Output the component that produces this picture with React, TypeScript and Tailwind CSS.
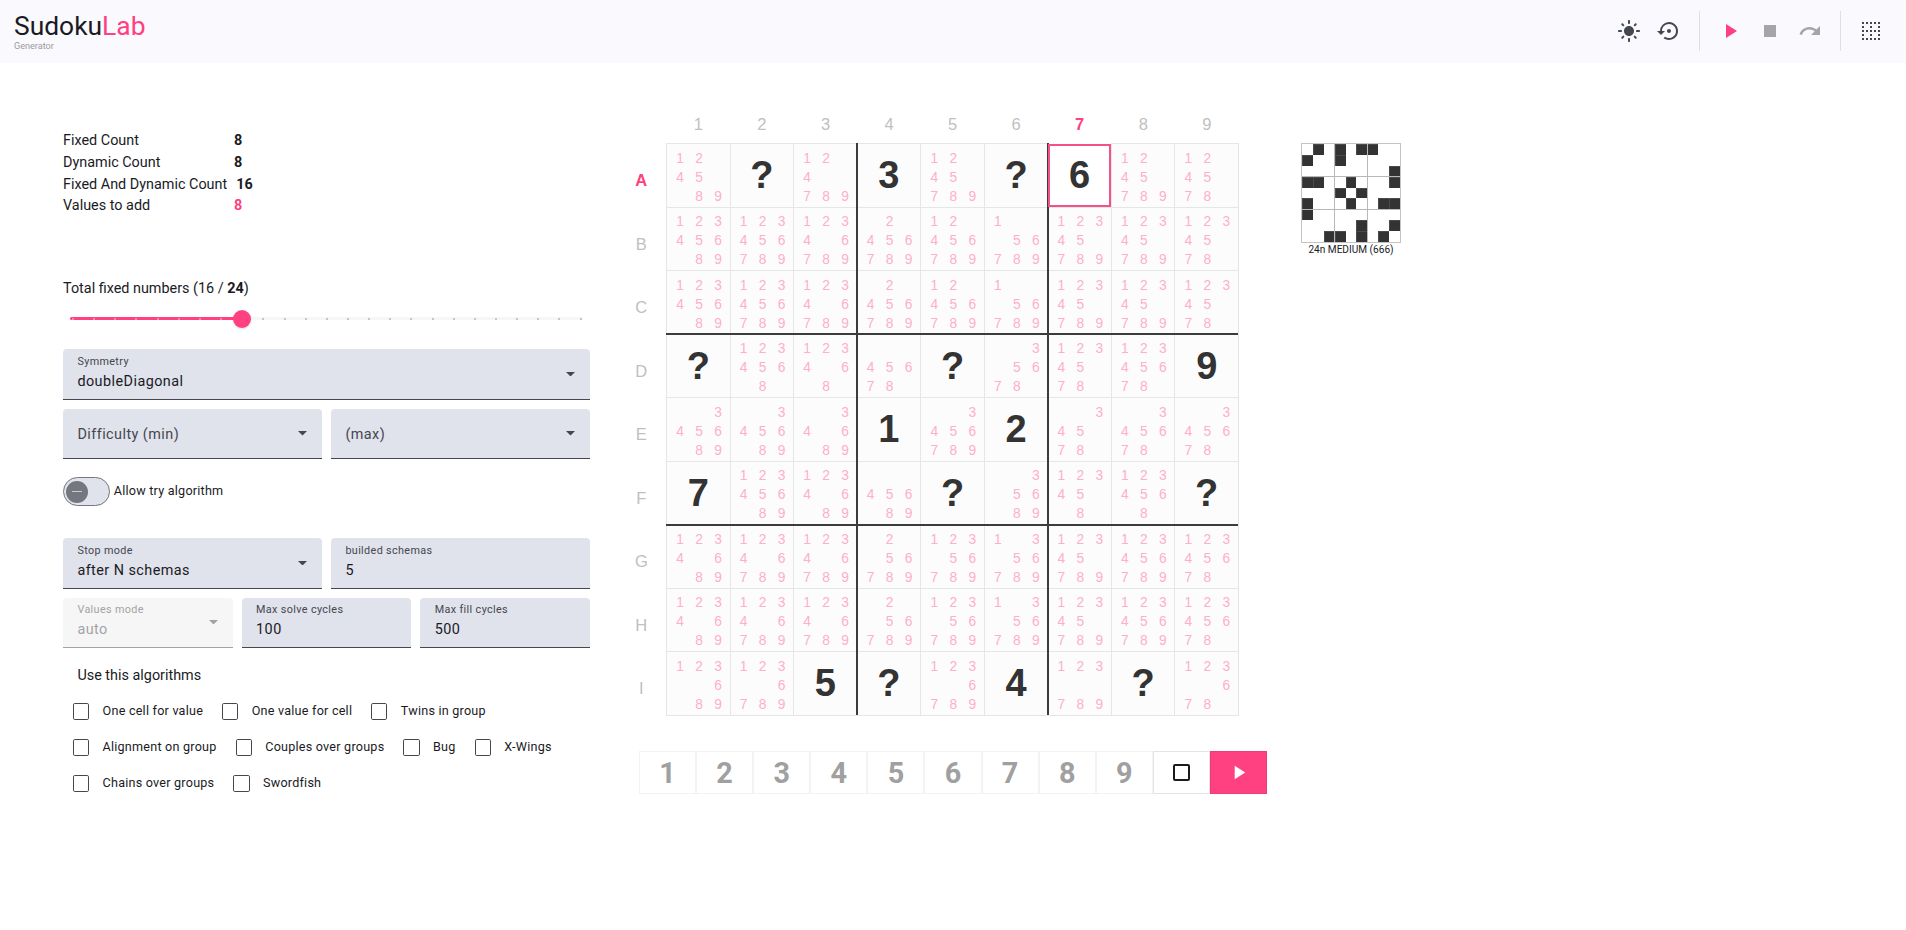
import React from "react";
import {
  MdBorderClear,
  MdLightMode,
  MdPlayArrow,
  MdRedo,
  MdSettingsBackupRestore,
  MdStop,
} from "react-icons/md";

// One entry per cell: "=x" is a fixed value, anything else lists the candidates.
const BOARD: string[][] = [
  ["124589", "=?", "124789", "=3", "1245789", "=?", "=6", "1245789", "124578"],
  ["12345689", "123456789", "12346789", "2456789", "12456789", "156789", "12345789", "12345789", "1234578"],
  ["12345689", "123456789", "12346789", "2456789", "12456789", "156789", "12345789", "12345789", "1234578"],
  ["=?", "1234568", "123468", "45678", "=?", "35678", "1234578", "12345678", "=9"],
  ["345689", "345689", "34689", "=1", "3456789", "=2", "34578", "345678", "345678"],
  ["=7", "12345689", "1234689", "45689", "=?", "35689", "123458", "1234568", "=?"],
  ["1234689", "12346789", "12346789", "256789", "12356789", "1356789", "12345789", "123456789", "12345678"],
  ["1234689", "12346789", "12346789", "256789", "12356789", "1356789", "12345789", "123456789", "12345678"],
  ["123689", "1236789", "=5", "=?", "1236789", "=4", "123789", "=?", "123678"],
];

const PREVIEW = [
  ".#.#.##..",
  "#..#.....",
  "........#",
  "##..#...#",
  "...#.#...",
  "#...#..##",
  "#........",
  ".....#..#",
  "..##.#.#.",
];

const DIGITS = ["1", "2", "3", "4", "5", "6", "7", "8", "9"];
const ROWS = ["A", "B", "C", "D", "E", "F", "G", "H", "I"];
const TICKS = Array.from({ length: 25 }, (_, i) => i);

const ALGORITHMS = [
  ["One cell for value", "One value for cell", "Twins in group"],
  ["Alignment on group", "Couples over groups", "Bug", "X-Wings"],
  ["Chains over groups", "Swordfish"],
];

function Header() {
  return (
    <header className="flex h-[63px] items-center justify-between bg-[#faf9fe] pr-[23px] pb-[2px] pl-[14px]">
      <div>
        <div className="h-[30px] text-[26.4px] leading-[30px] text-[#1a1b1f]">
          Sudoku<span className="text-[#ff4081]">Lab</span>
        </div>
        <div className="h-[10px] text-[9.1px] leading-[10px] text-[#9b9ba0]">Generator</div>
      </div>
      <div className="flex items-center text-[24px] text-[#44474e]">
        <MdLightMode />
        <MdSettingsBackupRestore className="ml-4" />
        <div className="ml-[18px] h-10 w-px bg-[#e0e0e4]" />
        <MdPlayArrow className="ml-[18px] text-[#ff4081]" />
        <MdStop className="ml-4 text-[#a4a4a9]" />
        <MdRedo className="ml-4 text-[#a4a4a9]" />
        <div className="ml-[18px] h-10 w-px bg-[#e0e0e4]" />
        <MdBorderClear className="ml-[18px]" />
      </div>
    </header>
  );
}

function Stat({ label, value, pink }: { label: string; value: string; pink?: boolean }) {
  return (
    <div className="flex h-[21.7px] items-center">
      <span className="min-w-[171px] pr-[9px]">{label}</span>
      <span className={pink ? "font-bold text-[#ff4081]" : "font-bold"}>{value}</span>
    </div>
  );
}

function Caret() {
  return (
    <svg className="h-[4.5px] w-[9px] shrink-0 fill-current" viewBox="0 0 10 5">
      <path d="M0 0h10L5 5z" />
    </svg>
  );
}

type FieldProps = { label: string; value?: string; select?: boolean; disabled?: boolean };

function Field({ label, value, select, disabled }: FieldProps) {
  const box = disabled
    ? "border-[#a3a3a5] bg-[#f6f6f6] text-[#a3a3a5]"
    : "border-[#44474e] bg-[#e0e2ec] text-[#44474e]";
  return (
    <div
      className={`flex h-[50.4px] min-w-0 flex-1 items-center justify-between rounded-t-[4px] border-b pl-[14.4px] pr-[14.6px] ${box}`}
    >
      {value ? (
        <div>
          <div className="text-[10.8px] leading-[14px] tracking-[0.36px]">{label}</div>
          <div
            className={`mt-[2px] text-[14.4px] leading-[22px] tracking-[0.45px] ${disabled ? "" : "text-[#1a1b1f]"}`}
          >
            {value}
          </div>
        </div>
      ) : (
        <div className="pt-[2px] text-[14.4px] tracking-[0.45px]">{label}</div>
      )}
      {select && <Caret />}
    </div>
  );
}

function Slider() {
  return (
    <div className="relative mt-[18px] ml-[7px] h-[3px] w-[513px] rounded bg-[#f7f7f9]">
      <div className="h-[3px] w-[172px] rounded bg-[#ff4081]" />
      {TICKS.map((i) => (
        <span
          key={i}
          className={`absolute top-[0.5px] size-[2px] rounded-full ${i < 8 ? "bg-[#ff9dbf]" : "bg-[#b4b5bb]"}`}
          style={{ left: 2 + i * 21.15 }}
        />
      ))}
      <span className="absolute -top-[7px] left-[163px] size-[18px] rounded-full bg-[#ff4081] shadow" />
    </div>
  );
}

function Settings() {
  return (
    <section className="w-[527px] pt-[67.3px]">
      <div className="text-[14.4px]">
        <Stat label="Fixed Count" value="8" />
        <Stat label="Dynamic Count" value="8" />
        <Stat label="Fixed And Dynamic Count" value="16" />
        <Stat label="Values to add" value="8" pink />
      </div>
      <div className="mt-[61.3px] h-[21px] text-[14.4px] leading-[21px]">
        Total fixed numbers (16 / <b>24</b>)
      </div>
      <Slider />
      <div className="mt-[29px] flex flex-col gap-[9px]">
        <div className="flex">
          <Field label="Symmetry" value="doubleDiagonal" select />
        </div>
        <div className="flex gap-[9px]">
          <Field label="Difficulty (min)" select />
          <Field label="(max)" select />
        </div>
      </div>
      <div className="mt-[18px] flex h-[29px] items-center">
        <div className="flex h-[29px] w-[47px] items-center rounded-full border border-[#74777f] bg-[#e0e2ec] pl-[2px]">
          <div className="flex size-[22px] items-center justify-center rounded-full bg-[#74777f]">
            <div className="h-[1.5px] w-[10px] bg-[#c9cbd4]" />
          </div>
        </div>
        <span className="ml-[3.8px] text-[12.6px] tracking-[0.225px]">Allow try algorithm</span>
      </div>
      <div className="mt-[32px] flex flex-col gap-[9px]">
        <div className="flex gap-[9px]">
          <Field label="Stop mode" value="after N schemas" select />
          <Field label="builded schemas" value="5" />
        </div>
        <div className="flex gap-[9px]">
          <Field label="Values mode" value="auto" select disabled />
          <Field label="Max solve cycles" value="100" />
          <Field label="Max fill cycles" value="500" />
        </div>
      </div>
      <div className="mt-[17.6px] ml-[14.4px] h-[20px] text-[14.4px] leading-[20px]">Use this algorithms</div>
      <div className="mt-[8px]">
        {ALGORITHMS.map((row) => (
          <div key={row[0]} className="flex h-9 items-center gap-[9.1px]">
            {row.map((name) => (
              <div key={name} className="flex items-center">
                <span className="mx-[9.9px] size-[16.2px] rounded-[1.8px] border border-[#44474e]" />
                <span className="pl-[3.6px] text-[12.6px] whitespace-nowrap tracking-[0.225px]">{name}</span>
              </div>
            ))}
          </div>
        ))}
      </div>
    </section>
  );
}

function Cell({ content, selected }: { content: string; selected: boolean }) {
  if (content.startsWith("=")) {
    return (
      <div
        className={`flex items-center justify-center text-[38px] leading-none font-bold text-[#333] ${
          selected
            ? "z-10 mt-px ml-px border-2 border-[#f4508a] bg-white pb-px"
            : "border-t border-l border-[#e6e6e6] bg-[#fcfcfc]"
        }`}
      >
        {content.slice(1)}
      </div>
    );
  }
  return (
    <div className="grid grid-cols-[repeat(3,19px)] grid-rows-[repeat(3,19px)] border-t border-l border-[#e6e6e6] bg-[#fcfcfc] pt-[4.8px] pl-[3.5px] text-center text-[13.8px] leading-[19px] text-[#ffafc9]">
      {DIGITS.map((d) => (
        <span key={d}>{content.includes(d) ? d : ""}</span>
      ))}
    </div>
  );
}

function Board() {
  return (
    <div className="font-['Liberation_Sans',Arial,sans-serif]">
      <div className="ml-[50.6px] grid h-[33px] w-[572px] grid-cols-9 text-center text-[16.5px] leading-[28px] text-[#c0c0c0]">
        {DIGITS.map((d) => (
          <span key={d} className={d === "7" ? "font-bold text-[#ff4081]" : ""}>
            {d}
          </span>
        ))}
      </div>
      <div className="flex">
        <div className="grid h-[571.5px] w-[50px] grid-rows-9 pl-[0.6px] text-center text-[16.5px] leading-[75.5px] text-[#c0c0c0]">
          {ROWS.map((r) => (
            <span key={r} className={r === "A" ? "h-[63px] font-bold text-[#ff4081]" : "h-[63px]"}>
              {r}
            </span>
          ))}
        </div>
        <div className="relative grid h-[572.5px] w-[573px] grid-cols-9 grid-rows-9 border-r border-b border-[#e6e6e6]">
          {BOARD.map((row, r) =>
            row.map((content, c) => (
              <Cell key={`${r}${c}`} content={content} selected={r === 0 && c === 6} />
            )),
          )}
          <div className="absolute top-0 left-[190px] h-full w-[2px] bg-[#3c3c3c]" />
          <div className="absolute top-0 left-[381px] h-full w-[2px] bg-[#3c3c3c]" />
          <div className="absolute top-[190px] left-0 h-[2px] w-full bg-[#3c3c3c]" />
          <div className="absolute top-[381px] left-0 h-[2px] w-full bg-[#3c3c3c]" />
        </div>
      </div>
    </div>
  );
}

function NumberPad() {
  return (
    <div className="grid h-[43px] w-[628px] grid-cols-11 grid-rows-[43px] leading-none">
      {DIGITS.map((d) => (
        <div
          key={d}
          className="flex items-center justify-center border border-[#f3f3f3] pt-px text-[28.8px] font-bold text-[#a0a0a0]"
        >
          {d}
        </div>
      ))}
      <div className="flex items-center justify-center border border-[#e4e4e4]">
        <span className="ml-px size-[17px] rounded-[2px] border-2 border-[#1a1b1f]" />
      </div>
      <div className="flex items-center justify-center border border-[#ee3c78] bg-[#ff4081] pl-px text-[23px] text-white">
        <MdPlayArrow />
      </div>
    </div>
  );
}

function Preview() {
  return (
    <div className="w-[100px]">
      <div className="relative grid h-[100px] w-[100px] grid-cols-9 grid-rows-9 border border-[#c4c4c4]">
        {PREVIEW.map((row, r) =>
          row.split("").map((mark, c) => (
            <span key={`${r}${c}`} className={mark === "#" ? "border-t border-l border-[#4a4a4a] bg-[#333]" : ""} />
          )),
        )}
        <div className="absolute top-0 left-[32px] h-full w-px bg-[#b8b8b8]" />
        <div className="absolute top-0 left-[65px] h-full w-px bg-[#b8b8b8]" />
        <div className="absolute top-[32px] left-0 h-px w-full bg-[#b8b8b8]" />
        <div className="absolute top-[65px] left-0 h-px w-full bg-[#b8b8b8]" />
      </div>
      <div className="text-center text-[10.1px] leading-[13px] whitespace-nowrap">24n MEDIUM (666)</div>
    </div>
  );
}

export default function App() {
  return (
    <div className="h-[930px] w-full overflow-hidden bg-white font-[Roboto,sans-serif] text-[#1a1b1f]">
      <Header />
      <main className="flex pl-[63px]">
        <Settings />
        <section className="ml-[26px] w-[651.5px] pt-[47px]">
          <Board />
          <div className="mt-[35.5px] ml-[23px]">
            <NumberPad />
          </div>
        </section>
        <aside className="ml-[33.5px] pt-20">
          <Preview />
        </aside>
      </main>
    </div>
  );
}
